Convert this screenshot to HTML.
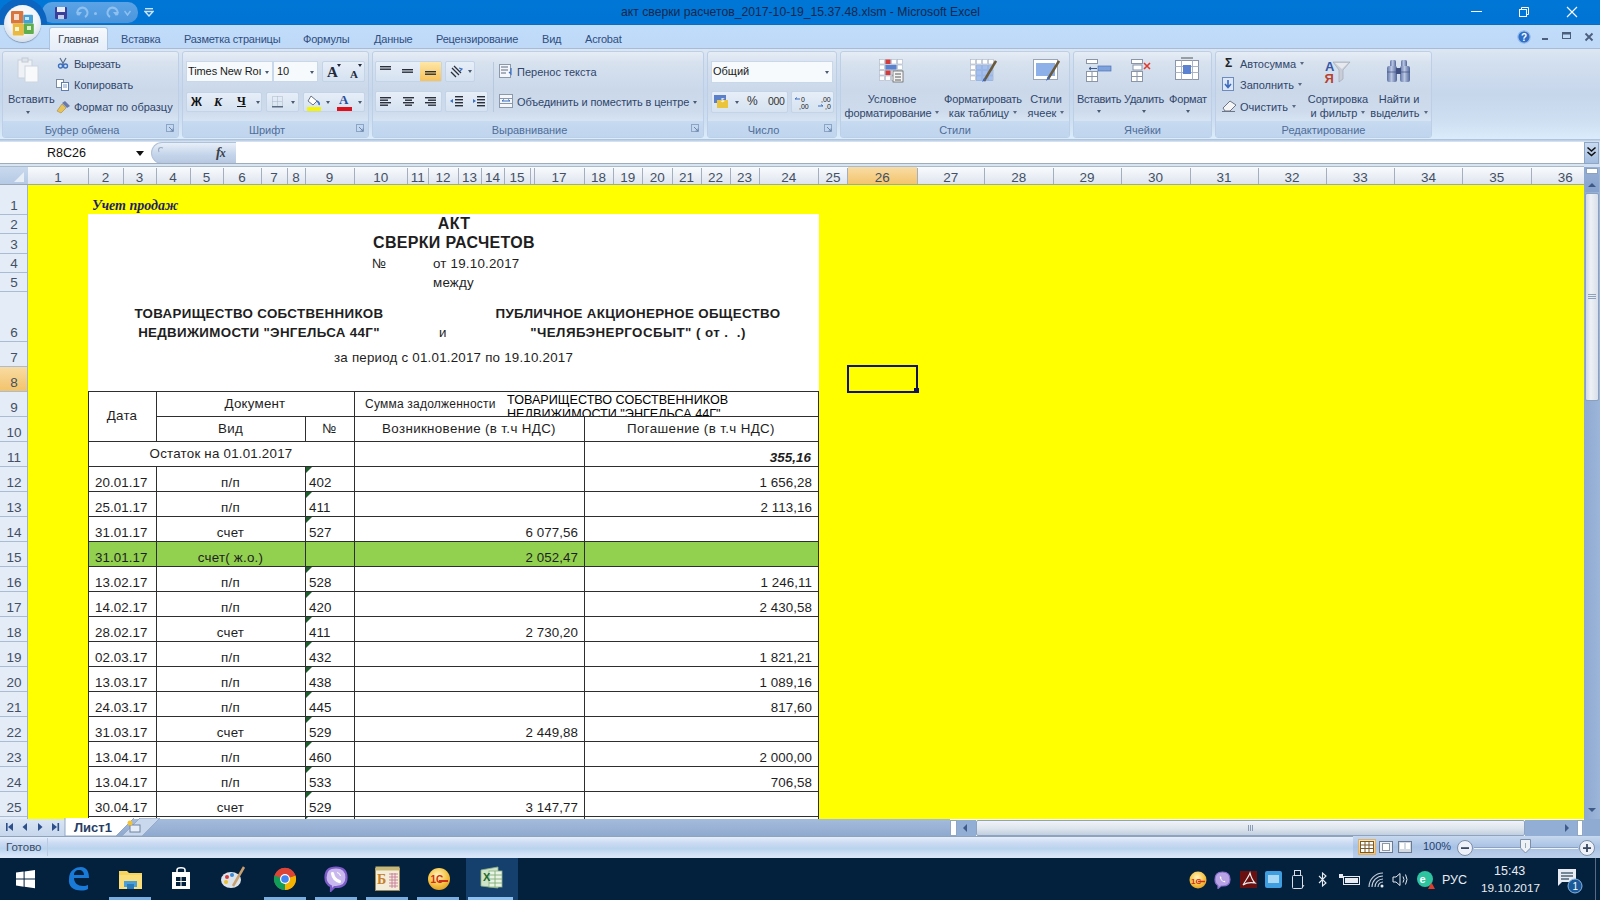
<!DOCTYPE html><html><head><meta charset="utf-8"><style>
*{margin:0;padding:0;box-sizing:border-box}
html,body{width:1600px;height:900px;overflow:hidden;background:#fff;font-family:"Liberation Sans",sans-serif}
.a{position:absolute}
.t{position:absolute;white-space:nowrap;line-height:1}
</style></head><body>
<div class="a" style="left:0;top:0;width:1600px;height:25px;background:linear-gradient(#0077d6,#0074d4 80%,#0079dc)"></div>
<div class="a" style="left:0;top:24px;width:1600px;height:1px;background:#1b67b0"></div>
<div class="a" style="left:0;top:25px;width:1600px;height:24px;background:linear-gradient(#b5e1fc,#bfdcfa 12%,#bfd9f7)"></div>
<div class="a" style="left:0;top:48px;width:1600px;height:93px;border-top:1px solid #a6bbd5;background:linear-gradient(#dde7f3 0%,#d2dfef 15%,#c6d6eb 50%,#cfe0f3 80%,#dcedfc 100%)"></div>
<div class="a" style="left:0;top:141px;width:1600px;height:26px;background:#d2e0f1"></div>
<div class="a" style="left:0;top:142px;width:151px;height:22px;background:#fff"></div>
<div class="a" style="left:235px;top:142px;width:1349px;height:22px;background:#fff"></div>
<div class="a" style="left:0;top:167px;width:1584px;height:18px;background:linear-gradient(#f9fbfd,#dde3ee)"></div>
<div class="a" style="left:0;top:167px;width:28px;height:18px;background:linear-gradient(#c9d9ee,#b4c9e4)"></div>
<svg class="a" style="left:13px;top:171px" width="12" height="12"><path d="M11 1 V11 H1Z" fill="#e8eef6"/></svg>
<div class="a" style="left:0;top:185px;width:28px;height:634px;background:#e4ecf7"></div>
<div class="a" style="left:28px;top:185px;width:1556px;height:634px;background:#ffff00"></div>
<div class="a" style="left:847.5px;top:167px;width:69.5px;height:18px;background:linear-gradient(#f9dca5,#f2c36a)"></div>
<div class="a" style="left:0;top:366px;width:28px;height:25px;background:linear-gradient(#f9dca5,#f2c36a)"></div>
<div class="a" style="left:87.5px;top:168px;width:1px;height:17px;background:#a3afbf"></div>
<div class="a" style="left:122.5px;top:168px;width:1px;height:17px;background:#a3afbf"></div>
<div class="a" style="left:155.5px;top:168px;width:1px;height:17px;background:#a3afbf"></div>
<div class="a" style="left:189.5px;top:168px;width:1px;height:17px;background:#a3afbf"></div>
<div class="a" style="left:222.5px;top:168px;width:1px;height:17px;background:#a3afbf"></div>
<div class="a" style="left:260.5px;top:168px;width:1px;height:17px;background:#a3afbf"></div>
<div class="a" style="left:286.5px;top:168px;width:1px;height:17px;background:#a3afbf"></div>
<div class="a" style="left:304.5px;top:168px;width:1px;height:17px;background:#a3afbf"></div>
<div class="a" style="left:353.5px;top:168px;width:1px;height:17px;background:#a3afbf"></div>
<div class="a" style="left:407.0px;top:168px;width:1px;height:17px;background:#a3afbf"></div>
<div class="a" style="left:427.5px;top:168px;width:1px;height:17px;background:#a3afbf"></div>
<div class="a" style="left:457.5px;top:168px;width:1px;height:17px;background:#a3afbf"></div>
<div class="a" style="left:480.5px;top:168px;width:1px;height:17px;background:#a3afbf"></div>
<div class="a" style="left:503.5px;top:168px;width:1px;height:17px;background:#a3afbf"></div>
<div class="a" style="left:529.5px;top:168px;width:1px;height:17px;background:#a3afbf"></div>
<div class="a" style="left:533.5px;top:168px;width:1px;height:17px;background:#a3afbf"></div>
<div class="a" style="left:583.5px;top:168px;width:1px;height:17px;background:#a3afbf"></div>
<div class="a" style="left:612.5px;top:168px;width:1px;height:17px;background:#a3afbf"></div>
<div class="a" style="left:642.0px;top:168px;width:1px;height:17px;background:#a3afbf"></div>
<div class="a" style="left:671.5px;top:168px;width:1px;height:17px;background:#a3afbf"></div>
<div class="a" style="left:700.5px;top:168px;width:1px;height:17px;background:#a3afbf"></div>
<div class="a" style="left:729.5px;top:168px;width:1px;height:17px;background:#a3afbf"></div>
<div class="a" style="left:758.5px;top:168px;width:1px;height:17px;background:#a3afbf"></div>
<div class="a" style="left:818.0px;top:168px;width:1px;height:17px;background:#a3afbf"></div>
<div class="a" style="left:847.0px;top:168px;width:1px;height:17px;background:#a3afbf"></div>
<div class="a" style="left:916.5px;top:168px;width:1px;height:17px;background:#a3afbf"></div>
<div class="a" style="left:983.9px;top:168px;width:1px;height:17px;background:#a3afbf"></div>
<div class="a" style="left:1052.5px;top:168px;width:1px;height:17px;background:#a3afbf"></div>
<div class="a" style="left:1120.5px;top:168px;width:1px;height:17px;background:#a3afbf"></div>
<div class="a" style="left:1189.5px;top:168px;width:1px;height:17px;background:#a3afbf"></div>
<div class="a" style="left:1257.5px;top:168px;width:1px;height:17px;background:#a3afbf"></div>
<div class="a" style="left:1325.5px;top:168px;width:1px;height:17px;background:#a3afbf"></div>
<div class="a" style="left:1394.0px;top:168px;width:1px;height:17px;background:#a3afbf"></div>
<div class="a" style="left:1462.0px;top:168px;width:1px;height:17px;background:#a3afbf"></div>
<div class="a" style="left:1530.5px;top:168px;width:1px;height:17px;background:#a3afbf"></div>
<div class="a" style="left:0;top:184px;width:1584px;height:1px;background:#9aa7b6"></div>
<div class="t" style="left:28px;top:171px;width:60px;text-align:center;font-size:13.5px;color:#435064">1</div>
<div class="t" style="left:88px;top:171px;width:35px;text-align:center;font-size:13.5px;color:#435064">2</div>
<div class="t" style="left:123px;top:171px;width:33px;text-align:center;font-size:13.5px;color:#435064">3</div>
<div class="t" style="left:156px;top:171px;width:34px;text-align:center;font-size:13.5px;color:#435064">4</div>
<div class="t" style="left:190px;top:171px;width:33px;text-align:center;font-size:13.5px;color:#435064">5</div>
<div class="t" style="left:223px;top:171px;width:38px;text-align:center;font-size:13.5px;color:#435064">6</div>
<div class="t" style="left:261px;top:171px;width:26px;text-align:center;font-size:13.5px;color:#435064">7</div>
<div class="t" style="left:287px;top:171px;width:18px;text-align:center;font-size:13.5px;color:#435064">8</div>
<div class="t" style="left:305px;top:171px;width:49px;text-align:center;font-size:13.5px;color:#435064">9</div>
<div class="t" style="left:354px;top:171px;width:53.5px;text-align:center;font-size:13.5px;color:#435064">10</div>
<div class="t" style="left:407.5px;top:171px;width:20.5px;text-align:center;font-size:13.5px;color:#435064">11</div>
<div class="t" style="left:428px;top:171px;width:30px;text-align:center;font-size:13.5px;color:#435064">12</div>
<div class="t" style="left:458px;top:171px;width:23px;text-align:center;font-size:13.5px;color:#435064">13</div>
<div class="t" style="left:481px;top:171px;width:23px;text-align:center;font-size:13.5px;color:#435064">14</div>
<div class="t" style="left:504px;top:171px;width:26px;text-align:center;font-size:13.5px;color:#435064">15</div>
<div class="t" style="left:534px;top:171px;width:50px;text-align:center;font-size:13.5px;color:#435064">17</div>
<div class="t" style="left:584px;top:171px;width:29px;text-align:center;font-size:13.5px;color:#435064">18</div>
<div class="t" style="left:613px;top:171px;width:29.5px;text-align:center;font-size:13.5px;color:#435064">19</div>
<div class="t" style="left:642.5px;top:171px;width:29.5px;text-align:center;font-size:13.5px;color:#435064">20</div>
<div class="t" style="left:672px;top:171px;width:29px;text-align:center;font-size:13.5px;color:#435064">21</div>
<div class="t" style="left:701px;top:171px;width:29px;text-align:center;font-size:13.5px;color:#435064">22</div>
<div class="t" style="left:730px;top:171px;width:29px;text-align:center;font-size:13.5px;color:#435064">23</div>
<div class="t" style="left:759px;top:171px;width:59.5px;text-align:center;font-size:13.5px;color:#435064">24</div>
<div class="t" style="left:818.5px;top:171px;width:29.0px;text-align:center;font-size:13.5px;color:#435064">25</div>
<div class="t" style="left:847.5px;top:171px;width:69.5px;text-align:center;font-size:13.5px;color:#435064">26</div>
<div class="t" style="left:917px;top:171px;width:67.39999999999998px;text-align:center;font-size:13.5px;color:#435064">27</div>
<div class="t" style="left:984.4px;top:171px;width:68.60000000000002px;text-align:center;font-size:13.5px;color:#435064">28</div>
<div class="t" style="left:1053px;top:171px;width:68px;text-align:center;font-size:13.5px;color:#435064">29</div>
<div class="t" style="left:1121px;top:171px;width:69px;text-align:center;font-size:13.5px;color:#435064">30</div>
<div class="t" style="left:1190px;top:171px;width:68px;text-align:center;font-size:13.5px;color:#435064">31</div>
<div class="t" style="left:1258px;top:171px;width:68px;text-align:center;font-size:13.5px;color:#435064">32</div>
<div class="t" style="left:1326px;top:171px;width:68.5px;text-align:center;font-size:13.5px;color:#435064">33</div>
<div class="t" style="left:1394.5px;top:171px;width:68.0px;text-align:center;font-size:13.5px;color:#435064">34</div>
<div class="t" style="left:1462.5px;top:171px;width:68.5px;text-align:center;font-size:13.5px;color:#435064">35</div>
<div class="t" style="left:1531px;top:171px;width:68.59999999999991px;text-align:center;font-size:13.5px;color:#435064">36</div>
<div class="t" style="left:0;top:199px;width:28px;text-align:center;font-size:13.5px;color:#435064">1</div>
<div class="a" style="left:0;top:213.5px;width:28px;height:1px;background:#a9bcd3"></div>
<div class="t" style="left:0;top:218px;width:28px;text-align:center;font-size:13.5px;color:#435064">2</div>
<div class="a" style="left:0;top:232.5px;width:28px;height:1px;background:#a9bcd3"></div>
<div class="t" style="left:0;top:238px;width:28px;text-align:center;font-size:13.5px;color:#435064">3</div>
<div class="a" style="left:0;top:252.5px;width:28px;height:1px;background:#a9bcd3"></div>
<div class="t" style="left:0;top:257px;width:28px;text-align:center;font-size:13.5px;color:#435064">4</div>
<div class="a" style="left:0;top:271.5px;width:28px;height:1px;background:#a9bcd3"></div>
<div class="t" style="left:0;top:276px;width:28px;text-align:center;font-size:13.5px;color:#435064">5</div>
<div class="a" style="left:0;top:290.5px;width:28px;height:1px;background:#a9bcd3"></div>
<div class="t" style="left:0;top:326px;width:28px;text-align:center;font-size:13.5px;color:#435064">6</div>
<div class="a" style="left:0;top:340.5px;width:28px;height:1px;background:#a9bcd3"></div>
<div class="t" style="left:0;top:351px;width:28px;text-align:center;font-size:13.5px;color:#435064">7</div>
<div class="a" style="left:0;top:365.5px;width:28px;height:1px;background:#a9bcd3"></div>
<div class="t" style="left:0;top:376px;width:28px;text-align:center;font-size:13.5px;color:#435064">8</div>
<div class="a" style="left:0;top:390.5px;width:28px;height:1px;background:#a9bcd3"></div>
<div class="t" style="left:0;top:401px;width:28px;text-align:center;font-size:13.5px;color:#435064">9</div>
<div class="a" style="left:0;top:415.5px;width:28px;height:1px;background:#a9bcd3"></div>
<div class="t" style="left:0;top:426px;width:28px;text-align:center;font-size:13.5px;color:#435064">10</div>
<div class="a" style="left:0;top:440.5px;width:28px;height:1px;background:#a9bcd3"></div>
<div class="t" style="left:0;top:451px;width:28px;text-align:center;font-size:13.5px;color:#435064">11</div>
<div class="a" style="left:0;top:465.5px;width:28px;height:1px;background:#a9bcd3"></div>
<div class="t" style="left:0;top:476px;width:28px;text-align:center;font-size:13.5px;color:#435064">12</div>
<div class="a" style="left:0;top:490.5px;width:28px;height:1px;background:#a9bcd3"></div>
<div class="t" style="left:0;top:501px;width:28px;text-align:center;font-size:13.5px;color:#435064">13</div>
<div class="a" style="left:0;top:515.5px;width:28px;height:1px;background:#a9bcd3"></div>
<div class="t" style="left:0;top:526px;width:28px;text-align:center;font-size:13.5px;color:#435064">14</div>
<div class="a" style="left:0;top:540.5px;width:28px;height:1px;background:#a9bcd3"></div>
<div class="t" style="left:0;top:551px;width:28px;text-align:center;font-size:13.5px;color:#435064">15</div>
<div class="a" style="left:0;top:565.5px;width:28px;height:1px;background:#a9bcd3"></div>
<div class="t" style="left:0;top:576px;width:28px;text-align:center;font-size:13.5px;color:#435064">16</div>
<div class="a" style="left:0;top:590.5px;width:28px;height:1px;background:#a9bcd3"></div>
<div class="t" style="left:0;top:601px;width:28px;text-align:center;font-size:13.5px;color:#435064">17</div>
<div class="a" style="left:0;top:615.5px;width:28px;height:1px;background:#a9bcd3"></div>
<div class="t" style="left:0;top:626px;width:28px;text-align:center;font-size:13.5px;color:#435064">18</div>
<div class="a" style="left:0;top:640.5px;width:28px;height:1px;background:#a9bcd3"></div>
<div class="t" style="left:0;top:651px;width:28px;text-align:center;font-size:13.5px;color:#435064">19</div>
<div class="a" style="left:0;top:665.5px;width:28px;height:1px;background:#a9bcd3"></div>
<div class="t" style="left:0;top:676px;width:28px;text-align:center;font-size:13.5px;color:#435064">20</div>
<div class="a" style="left:0;top:690.5px;width:28px;height:1px;background:#a9bcd3"></div>
<div class="t" style="left:0;top:701px;width:28px;text-align:center;font-size:13.5px;color:#435064">21</div>
<div class="a" style="left:0;top:715.5px;width:28px;height:1px;background:#a9bcd3"></div>
<div class="t" style="left:0;top:726px;width:28px;text-align:center;font-size:13.5px;color:#435064">22</div>
<div class="a" style="left:0;top:740.5px;width:28px;height:1px;background:#a9bcd3"></div>
<div class="t" style="left:0;top:751px;width:28px;text-align:center;font-size:13.5px;color:#435064">23</div>
<div class="a" style="left:0;top:765.5px;width:28px;height:1px;background:#a9bcd3"></div>
<div class="t" style="left:0;top:776px;width:28px;text-align:center;font-size:13.5px;color:#435064">24</div>
<div class="a" style="left:0;top:790.5px;width:28px;height:1px;background:#a9bcd3"></div>
<div class="t" style="left:0;top:801px;width:28px;text-align:center;font-size:13.5px;color:#435064">25</div>
<div class="a" style="left:0;top:815.5px;width:28px;height:1px;background:#a9bcd3"></div>
<div class="t" style="left:0;top:826px;width:28px;text-align:center;font-size:13.5px;color:#435064">26</div>
<div class="a" style="left:27px;top:185px;width:1px;height:634px;background:#9fb3cb"></div>
<div class="a" style="left:88px;top:214px;width:730.5px;height:605px;background:#fff"></div>
<div class="a" style="left:88px;top:541px;width:730.5px;height:25px;background:#92d050"></div>
<div class="a" style="left:88px;top:391px;width:731px;height:1px;background:#2e2e2e"></div>
<div class="a" style="left:156px;top:416px;width:663px;height:1px;background:#2e2e2e"></div>
<div class="a" style="left:88px;top:441px;width:731px;height:1px;background:#2e2e2e"></div>
<div class="a" style="left:88px;top:466px;width:731px;height:1px;background:#2e2e2e"></div>
<div class="a" style="left:88px;top:491px;width:731px;height:1px;background:#2e2e2e"></div>
<div class="a" style="left:88px;top:516px;width:731px;height:1px;background:#2e2e2e"></div>
<div class="a" style="left:88px;top:541px;width:731px;height:1px;background:#2e2e2e"></div>
<div class="a" style="left:88px;top:566px;width:731px;height:1px;background:#2e2e2e"></div>
<div class="a" style="left:88px;top:591px;width:731px;height:1px;background:#2e2e2e"></div>
<div class="a" style="left:88px;top:616px;width:731px;height:1px;background:#2e2e2e"></div>
<div class="a" style="left:88px;top:641px;width:731px;height:1px;background:#2e2e2e"></div>
<div class="a" style="left:88px;top:666px;width:731px;height:1px;background:#2e2e2e"></div>
<div class="a" style="left:88px;top:691px;width:731px;height:1px;background:#2e2e2e"></div>
<div class="a" style="left:88px;top:716px;width:731px;height:1px;background:#2e2e2e"></div>
<div class="a" style="left:88px;top:741px;width:731px;height:1px;background:#2e2e2e"></div>
<div class="a" style="left:88px;top:766px;width:731px;height:1px;background:#2e2e2e"></div>
<div class="a" style="left:88px;top:791px;width:731px;height:1px;background:#2e2e2e"></div>
<div class="a" style="left:88px;top:816px;width:731px;height:1px;background:#2e2e2e"></div>
<div class="a" style="left:88px;top:391px;width:1px;height:429px;background:#2e2e2e"></div>
<div class="a" style="left:818px;top:391px;width:1px;height:429px;background:#2e2e2e"></div>
<div class="a" style="left:156px;top:391px;width:1px;height:51px;background:#2e2e2e"></div>
<div class="a" style="left:156px;top:466px;width:1px;height:354px;background:#2e2e2e"></div>
<div class="a" style="left:305px;top:416px;width:1px;height:26px;background:#2e2e2e"></div>
<div class="a" style="left:305px;top:466px;width:1px;height:354px;background:#2e2e2e"></div>
<div class="a" style="left:354px;top:391px;width:1px;height:429px;background:#2e2e2e"></div>
<div class="a" style="left:584px;top:416px;width:1px;height:404px;background:#2e2e2e"></div>
<div class="t" style="left:92px;top:199px;font-size:14px;font-weight:bold;font-style:italic;color:#1f1f5f;letter-spacing:0;font-family:'Liberation Serif',serif">Учет продаж</div>
<div class="t" style="left:354px;top:216px;width:200px;text-align:center;font-size:16px;font-weight:bold;font-style:normal;color:#1e1e1e;letter-spacing:0.33px;">АКТ</div>
<div class="t" style="left:354px;top:235px;width:200px;text-align:center;font-size:16px;font-weight:bold;font-style:normal;color:#1e1e1e;letter-spacing:0.33px;">СВЕРКИ РАСЧЕТОВ</div>
<div class="t" style="left:372px;top:257px;font-size:13.33px;font-weight:normal;font-style:normal;color:#1e1e1e;letter-spacing:0.22px;">№</div>
<div class="t" style="left:433px;top:257px;font-size:13.33px;font-weight:normal;font-style:normal;color:#1e1e1e;letter-spacing:0.22px;">от 19.10.2017</div>
<div class="t" style="left:433px;top:276px;font-size:13.33px;font-weight:normal;font-style:normal;color:#1e1e1e;letter-spacing:0.22px;">между</div>
<div class="t" style="left:88px;top:307px;width:342px;text-align:center;font-size:13.33px;font-weight:bold;font-style:normal;color:#1e1e1e;letter-spacing:0.33px;">ТОВАРИЩЕСТВО СОБСТВЕННИКОВ</div>
<div class="t" style="left:88px;top:326px;width:342px;text-align:center;font-size:13.33px;font-weight:bold;font-style:normal;color:#1e1e1e;letter-spacing:0.33px;">НЕДВИЖИМОСТИ "ЭНГЕЛЬСА 44Г"</div>
<div class="t" style="left:439px;top:326px;font-size:13.33px;font-weight:normal;font-style:normal;color:#1e1e1e;letter-spacing:0.22px;">и</div>
<div class="t" style="left:480px;top:307px;width:316px;text-align:center;font-size:13.33px;font-weight:bold;font-style:normal;color:#1e1e1e;letter-spacing:0.33px;">ПУБЛИЧНОЕ АКЦИОНЕРНОЕ ОБЩЕСТВО</div>
<div class="t" style="left:480px;top:326px;width:316px;text-align:center;font-size:13.33px;font-weight:bold;font-style:normal;color:#1e1e1e;letter-spacing:0.44px;white-space:pre">"ЧЕЛЯБЭНЕРГОСБЫТ" ( от .  .)</div>
<div class="t" style="left:334px;top:351px;font-size:13.33px;font-weight:normal;font-style:normal;color:#1e1e1e;letter-spacing:0.22px;">за период с 01.01.2017 по 19.10.2017</div>
<div class="t" style="left:88px;top:409px;width:68px;text-align:center;font-size:13.33px;font-weight:normal;font-style:normal;color:#1e1e1e;letter-spacing:0.22px;">Дата</div>
<div class="t" style="left:156px;top:397px;width:198px;text-align:center;font-size:13.33px;font-weight:normal;font-style:normal;color:#1e1e1e;letter-spacing:0.22px;">Документ</div>
<div class="t" style="left:156px;top:422px;width:149px;text-align:center;font-size:13.33px;font-weight:normal;font-style:normal;color:#1e1e1e;letter-spacing:0.22px;">Вид</div>
<div class="t" style="left:305px;top:422px;width:49px;text-align:center;font-size:13.33px;font-weight:normal;font-style:normal;color:#1e1e1e;letter-spacing:0.22px;">№</div>
<div class="t" style="left:365px;top:398px;font-size:12px;font-weight:normal;font-style:normal;color:#1e1e1e;letter-spacing:0.22px;">Сумма задолженности</div>
<div class="a" style="left:505px;top:392px;width:300px;height:24px;overflow:hidden"><div class="t" style="left:2px;top:1px;font-size:12.6px;line-height:14px">ТОВАРИЩЕСТВО СОБСТВЕННИКОВ<br>НЕДВИЖИМОСТИ "ЭНГЕЛЬСА 44Г"</div></div>
<div class="t" style="left:354px;top:422px;width:230px;text-align:center;font-size:13.33px;font-weight:normal;font-style:normal;color:#1e1e1e;letter-spacing:0.36px">Возникновение (в т.ч НДС)</div>
<div class="t" style="left:584px;top:422px;width:234px;text-align:center;font-size:13.33px;font-weight:normal;font-style:normal;color:#1e1e1e;letter-spacing:0.38px">Погашение (в т.ч НДС)</div>
<div class="t" style="left:88px;top:447px;width:266px;text-align:center;font-size:13.33px;font-weight:normal;font-style:normal;color:#1e1e1e;letter-spacing:0.22px;">Остаток на 01.01.2017</div>
<div class="t" style="left:584px;top:451px;width:227px;text-align:right;font-size:13.33px;font-weight:bold;font-style:italic;color:#1e1e1e;letter-spacing:0.08px;">355,16</div>
<div class="t" style="left:95px;top:476px;font-size:13.33px;font-weight:normal;font-style:normal;color:#1e1e1e;letter-spacing:0.08px;">20.01.17</div>
<div class="t" style="left:156px;top:476px;width:149px;text-align:center;font-size:13.33px;font-weight:normal;font-style:normal;color:#1e1e1e;letter-spacing:0.22px;">п/п</div>
<div class="t" style="left:309px;top:476px;font-size:13.33px;font-weight:normal;font-style:normal;color:#1e1e1e;letter-spacing:0.08px;">402</div>
<div class="a" style="left:306px;top:467px;width:0;height:0;border-top:6px solid #1d5f2c;border-right:6px solid transparent"></div>
<div class="t" style="left:584px;top:476px;width:228px;text-align:right;font-size:13.33px;font-weight:normal;font-style:normal;color:#1e1e1e;letter-spacing:0.08px;">1 656,28</div>
<div class="t" style="left:95px;top:501px;font-size:13.33px;font-weight:normal;font-style:normal;color:#1e1e1e;letter-spacing:0.08px;">25.01.17</div>
<div class="t" style="left:156px;top:501px;width:149px;text-align:center;font-size:13.33px;font-weight:normal;font-style:normal;color:#1e1e1e;letter-spacing:0.22px;">п/п</div>
<div class="t" style="left:309px;top:501px;font-size:13.33px;font-weight:normal;font-style:normal;color:#1e1e1e;letter-spacing:0.08px;">411</div>
<div class="a" style="left:306px;top:492px;width:0;height:0;border-top:6px solid #1d5f2c;border-right:6px solid transparent"></div>
<div class="t" style="left:584px;top:501px;width:228px;text-align:right;font-size:13.33px;font-weight:normal;font-style:normal;color:#1e1e1e;letter-spacing:0.08px;">2 113,16</div>
<div class="t" style="left:95px;top:526px;font-size:13.33px;font-weight:normal;font-style:normal;color:#1e1e1e;letter-spacing:0.08px;">31.01.17</div>
<div class="t" style="left:156px;top:526px;width:149px;text-align:center;font-size:13.33px;font-weight:normal;font-style:normal;color:#1e1e1e;letter-spacing:0.22px;">счет</div>
<div class="t" style="left:309px;top:526px;font-size:13.33px;font-weight:normal;font-style:normal;color:#1e1e1e;letter-spacing:0.08px;">527</div>
<div class="a" style="left:306px;top:517px;width:0;height:0;border-top:6px solid #1d5f2c;border-right:6px solid transparent"></div>
<div class="t" style="left:354px;top:526px;width:224px;text-align:right;font-size:13.33px;font-weight:normal;font-style:normal;color:#1e1e1e;letter-spacing:0.08px;">6 077,56</div>
<div class="t" style="left:95px;top:551px;font-size:13.33px;font-weight:normal;font-style:normal;color:#1e1e1e;letter-spacing:0.08px;">31.01.17</div>
<div class="t" style="left:156px;top:551px;width:149px;text-align:center;font-size:13.33px;font-weight:normal;font-style:normal;color:#1e1e1e;letter-spacing:0.22px;">счет( ж.о.)</div>
<div class="t" style="left:354px;top:551px;width:224px;text-align:right;font-size:13.33px;font-weight:normal;font-style:normal;color:#1e1e1e;letter-spacing:0.08px;">2 052,47</div>
<div class="t" style="left:95px;top:576px;font-size:13.33px;font-weight:normal;font-style:normal;color:#1e1e1e;letter-spacing:0.08px;">13.02.17</div>
<div class="t" style="left:156px;top:576px;width:149px;text-align:center;font-size:13.33px;font-weight:normal;font-style:normal;color:#1e1e1e;letter-spacing:0.22px;">п/п</div>
<div class="t" style="left:309px;top:576px;font-size:13.33px;font-weight:normal;font-style:normal;color:#1e1e1e;letter-spacing:0.08px;">528</div>
<div class="a" style="left:306px;top:567px;width:0;height:0;border-top:6px solid #1d5f2c;border-right:6px solid transparent"></div>
<div class="t" style="left:584px;top:576px;width:228px;text-align:right;font-size:13.33px;font-weight:normal;font-style:normal;color:#1e1e1e;letter-spacing:0.08px;">1 246,11</div>
<div class="t" style="left:95px;top:601px;font-size:13.33px;font-weight:normal;font-style:normal;color:#1e1e1e;letter-spacing:0.08px;">14.02.17</div>
<div class="t" style="left:156px;top:601px;width:149px;text-align:center;font-size:13.33px;font-weight:normal;font-style:normal;color:#1e1e1e;letter-spacing:0.22px;">п/п</div>
<div class="t" style="left:309px;top:601px;font-size:13.33px;font-weight:normal;font-style:normal;color:#1e1e1e;letter-spacing:0.08px;">420</div>
<div class="a" style="left:306px;top:592px;width:0;height:0;border-top:6px solid #1d5f2c;border-right:6px solid transparent"></div>
<div class="t" style="left:584px;top:601px;width:228px;text-align:right;font-size:13.33px;font-weight:normal;font-style:normal;color:#1e1e1e;letter-spacing:0.08px;">2 430,58</div>
<div class="t" style="left:95px;top:626px;font-size:13.33px;font-weight:normal;font-style:normal;color:#1e1e1e;letter-spacing:0.08px;">28.02.17</div>
<div class="t" style="left:156px;top:626px;width:149px;text-align:center;font-size:13.33px;font-weight:normal;font-style:normal;color:#1e1e1e;letter-spacing:0.22px;">счет</div>
<div class="t" style="left:309px;top:626px;font-size:13.33px;font-weight:normal;font-style:normal;color:#1e1e1e;letter-spacing:0.08px;">411</div>
<div class="a" style="left:306px;top:617px;width:0;height:0;border-top:6px solid #1d5f2c;border-right:6px solid transparent"></div>
<div class="t" style="left:354px;top:626px;width:224px;text-align:right;font-size:13.33px;font-weight:normal;font-style:normal;color:#1e1e1e;letter-spacing:0.08px;">2 730,20</div>
<div class="t" style="left:95px;top:651px;font-size:13.33px;font-weight:normal;font-style:normal;color:#1e1e1e;letter-spacing:0.08px;">02.03.17</div>
<div class="t" style="left:156px;top:651px;width:149px;text-align:center;font-size:13.33px;font-weight:normal;font-style:normal;color:#1e1e1e;letter-spacing:0.22px;">п/п</div>
<div class="t" style="left:309px;top:651px;font-size:13.33px;font-weight:normal;font-style:normal;color:#1e1e1e;letter-spacing:0.08px;">432</div>
<div class="a" style="left:306px;top:642px;width:0;height:0;border-top:6px solid #1d5f2c;border-right:6px solid transparent"></div>
<div class="t" style="left:584px;top:651px;width:228px;text-align:right;font-size:13.33px;font-weight:normal;font-style:normal;color:#1e1e1e;letter-spacing:0.08px;">1 821,21</div>
<div class="t" style="left:95px;top:676px;font-size:13.33px;font-weight:normal;font-style:normal;color:#1e1e1e;letter-spacing:0.08px;">13.03.17</div>
<div class="t" style="left:156px;top:676px;width:149px;text-align:center;font-size:13.33px;font-weight:normal;font-style:normal;color:#1e1e1e;letter-spacing:0.22px;">п/п</div>
<div class="t" style="left:309px;top:676px;font-size:13.33px;font-weight:normal;font-style:normal;color:#1e1e1e;letter-spacing:0.08px;">438</div>
<div class="a" style="left:306px;top:667px;width:0;height:0;border-top:6px solid #1d5f2c;border-right:6px solid transparent"></div>
<div class="t" style="left:584px;top:676px;width:228px;text-align:right;font-size:13.33px;font-weight:normal;font-style:normal;color:#1e1e1e;letter-spacing:0.08px;">1 089,16</div>
<div class="t" style="left:95px;top:701px;font-size:13.33px;font-weight:normal;font-style:normal;color:#1e1e1e;letter-spacing:0.08px;">24.03.17</div>
<div class="t" style="left:156px;top:701px;width:149px;text-align:center;font-size:13.33px;font-weight:normal;font-style:normal;color:#1e1e1e;letter-spacing:0.22px;">п/п</div>
<div class="t" style="left:309px;top:701px;font-size:13.33px;font-weight:normal;font-style:normal;color:#1e1e1e;letter-spacing:0.08px;">445</div>
<div class="a" style="left:306px;top:692px;width:0;height:0;border-top:6px solid #1d5f2c;border-right:6px solid transparent"></div>
<div class="t" style="left:584px;top:701px;width:228px;text-align:right;font-size:13.33px;font-weight:normal;font-style:normal;color:#1e1e1e;letter-spacing:0.08px;">817,60</div>
<div class="t" style="left:95px;top:726px;font-size:13.33px;font-weight:normal;font-style:normal;color:#1e1e1e;letter-spacing:0.08px;">31.03.17</div>
<div class="t" style="left:156px;top:726px;width:149px;text-align:center;font-size:13.33px;font-weight:normal;font-style:normal;color:#1e1e1e;letter-spacing:0.22px;">счет</div>
<div class="t" style="left:309px;top:726px;font-size:13.33px;font-weight:normal;font-style:normal;color:#1e1e1e;letter-spacing:0.08px;">529</div>
<div class="a" style="left:306px;top:717px;width:0;height:0;border-top:6px solid #1d5f2c;border-right:6px solid transparent"></div>
<div class="t" style="left:354px;top:726px;width:224px;text-align:right;font-size:13.33px;font-weight:normal;font-style:normal;color:#1e1e1e;letter-spacing:0.08px;">2 449,88</div>
<div class="t" style="left:95px;top:751px;font-size:13.33px;font-weight:normal;font-style:normal;color:#1e1e1e;letter-spacing:0.08px;">13.04.17</div>
<div class="t" style="left:156px;top:751px;width:149px;text-align:center;font-size:13.33px;font-weight:normal;font-style:normal;color:#1e1e1e;letter-spacing:0.22px;">п/п</div>
<div class="t" style="left:309px;top:751px;font-size:13.33px;font-weight:normal;font-style:normal;color:#1e1e1e;letter-spacing:0.08px;">460</div>
<div class="a" style="left:306px;top:742px;width:0;height:0;border-top:6px solid #1d5f2c;border-right:6px solid transparent"></div>
<div class="t" style="left:584px;top:751px;width:228px;text-align:right;font-size:13.33px;font-weight:normal;font-style:normal;color:#1e1e1e;letter-spacing:0.08px;">2 000,00</div>
<div class="t" style="left:95px;top:776px;font-size:13.33px;font-weight:normal;font-style:normal;color:#1e1e1e;letter-spacing:0.08px;">13.04.17</div>
<div class="t" style="left:156px;top:776px;width:149px;text-align:center;font-size:13.33px;font-weight:normal;font-style:normal;color:#1e1e1e;letter-spacing:0.22px;">п/п</div>
<div class="t" style="left:309px;top:776px;font-size:13.33px;font-weight:normal;font-style:normal;color:#1e1e1e;letter-spacing:0.08px;">533</div>
<div class="a" style="left:306px;top:767px;width:0;height:0;border-top:6px solid #1d5f2c;border-right:6px solid transparent"></div>
<div class="t" style="left:584px;top:776px;width:228px;text-align:right;font-size:13.33px;font-weight:normal;font-style:normal;color:#1e1e1e;letter-spacing:0.08px;">706,58</div>
<div class="t" style="left:95px;top:801px;font-size:13.33px;font-weight:normal;font-style:normal;color:#1e1e1e;letter-spacing:0.08px;">30.04.17</div>
<div class="t" style="left:156px;top:801px;width:149px;text-align:center;font-size:13.33px;font-weight:normal;font-style:normal;color:#1e1e1e;letter-spacing:0.22px;">счет</div>
<div class="t" style="left:309px;top:801px;font-size:13.33px;font-weight:normal;font-style:normal;color:#1e1e1e;letter-spacing:0.08px;">529</div>
<div class="a" style="left:306px;top:792px;width:0;height:0;border-top:6px solid #1d5f2c;border-right:6px solid transparent"></div>
<div class="t" style="left:354px;top:801px;width:224px;text-align:right;font-size:13.33px;font-weight:normal;font-style:normal;color:#1e1e1e;letter-spacing:0.08px;">3 147,77</div>
<div class="a" style="left:306px;top:817px;width:0;height:0;border-top:2px solid #1d5f2c;border-right:2px solid transparent"></div>
<div class="a" style="left:847px;top:365px;width:71px;height:28px;border:2px solid #121256"></div>
<div class="a" style="left:914px;top:388px;width:5px;height:5px;background:#121256"></div>
<div class="a" style="left:42px;top:2px;width:96px;height:21px;border-radius:10px;background:linear-gradient(#5aa3e6,#4a94dc)"></div>
<svg class="a" style="left:54px;top:6px" width="14" height="14" viewBox="0 0 14 14"><rect x="1" y="1" width="12" height="12" rx="1" fill="#3b3f9a"/><rect x="3" y="1" width="8" height="5" fill="#e8ecf6"/><rect x="4" y="9" width="6" height="4" fill="#c7cde8"/></svg>
<svg class="a" style="left:75px;top:6px" width="14" height="13" viewBox="0 0 14 13"><path d="M3 9 A5 5 0 1 1 10 11" fill="none" stroke="#8fc0ee" stroke-width="2.2"/><path d="M1 6 L4 10 L7 6Z" fill="#8fc0ee"/></svg>
<div class="a" style="left:94px;top:12px;width:3px;height:3px;border-radius:50%;background:#8fc0ee"></div>
<svg class="a" style="left:106px;top:6px" width="14" height="13" viewBox="0 0 14 13"><path d="M11 9 A5 5 0 1 0 4 11" fill="none" stroke="#8fc0ee" stroke-width="2.2"/><path d="M13 6 L10 10 L7 6Z" fill="#8fc0ee"/></svg>
<svg class="a" style="left:124px;top:10px" width="7" height="6" viewBox="0 0 7 6"><path d="M0.5 1 L3.5 5 L6.5 1" fill="none" stroke="#8fc0ee" stroke-width="1.5"/></svg>
<svg class="a" style="left:144px;top:7px" width="10" height="10" viewBox="0 0 10 10"><rect x="1" y="1" width="8" height="1.4" fill="#cfe3f7"/><path d="M1 4.5 L5 9 L9 4.5Z" fill="none" stroke="#cfe3f7" stroke-width="1.4"/></svg>
<div class="t" style="left:621px;top:6px;font-size:12.2px;color:#13284d;">акт сверки расчетов_2017-10-19_15.37.48.xlsm - Microsoft Excel</div>
<div class="a" style="left:1471px;top:11px;width:11px;height:1px;background:#fff"></div>
<svg class="a" style="left:1518px;top:6px" width="12" height="12" viewBox="0 0 12 12"><rect x="1.5" y="3.5" width="7" height="7" fill="none" stroke="#fff"/><path d="M3.5 3.5 V1.5 H10.5 V8.5 H8.5" fill="none" stroke="#fff"/></svg>
<svg class="a" style="left:1566px;top:6px" width="12" height="12" viewBox="0 0 12 12"><path d="M1 1 L11 11 M11 1 L1 11" stroke="#fff" stroke-width="1.1"/></svg>
<div class="a" style="left:0;top:0;width:50px;height:24px;overflow:hidden"><div class="a" style="left:-3px;top:-2px;width:50px;height:50px;border-radius:50%;background:#0a64c0"></div></div>
<div class="a" style="left:4px;top:5px;width:37px;height:37px;border-radius:50%;background:radial-gradient(circle at 50% 40%,#ffffff 0%,#f1f4f8 50%,#cdd8e4 85%,#aebdd0 100%);box-shadow:0 1px 1px #7f97b5"></div>
<svg class="a" style="left:10px;top:10px" width="26" height="27" viewBox="0 0 26 27"><rect x="1" y="1" width="12.3" height="12.5" rx="1" fill="#d8763e"/><rect x="4" y="4" width="5" height="6" fill="#f6ddd0"/><rect x="13.3" y="4.7" width="9.7" height="8.8" rx="1" fill="#45a0d6"/><rect x="15" y="7" width="4" height="3" fill="#c8e6f8"/><rect x="2.8" y="13.5" width="11" height="12" rx="1" fill="#e9b940"/><rect x="5" y="17" width="4" height="4" fill="#fff6d8"/><rect x="13.8" y="13.5" width="10" height="10.5" rx="1" fill="#5fae4e"/><rect x="17" y="16" width="4" height="4" fill="#d8f0c8"/></svg>
<div class="a" style="left:49px;top:27px;width:59px;height:23px;border-radius:3px 3px 0 0;border:1px solid #a8c4e2;border-bottom:none;background:linear-gradient(#f6f9fd,#e6eef8)"></div>
<div class="t" style="left:58px;top:34px;font-size:11px;color:#333d4c;letter-spacing:-0.2px">Главная</div>
<div class="t" style="left:121px;top:34px;font-size:11px;color:#2f4e80;letter-spacing:-0.2px">Вставка</div>
<div class="t" style="left:184px;top:34px;font-size:11px;color:#2f4e80;letter-spacing:-0.2px">Разметка страницы</div>
<div class="t" style="left:303px;top:34px;font-size:11px;color:#2f4e80;letter-spacing:-0.2px">Формулы</div>
<div class="t" style="left:374px;top:34px;font-size:11px;color:#2f4e80;letter-spacing:-0.2px">Данные</div>
<div class="t" style="left:436px;top:34px;font-size:11px;color:#2f4e80;letter-spacing:-0.2px">Рецензирование</div>
<div class="t" style="left:542px;top:34px;font-size:11px;color:#2f4e80;letter-spacing:-0.2px">Вид</div>
<div class="t" style="left:585px;top:34px;font-size:11px;color:#2f4e80;letter-spacing:-0.2px">Acrobat</div>
<svg class="a" style="left:1517px;top:30px" width="14" height="14" viewBox="0 0 14 14"><circle cx="7" cy="7" r="6.2" fill="#2f6fc8" stroke="#9cc0ea" stroke-width="1.2"/><text x="7" y="10.5" font-size="10" font-weight="bold" text-anchor="middle" fill="#fff" font-family="Liberation Sans">?</text></svg>
<div class="a" style="left:1542px;top:38px;width:6px;height:2px;background:#4b5f7d"></div>
<svg class="a" style="left:1562px;top:32px" width="10" height="8" viewBox="0 0 10 8"><rect x="0.5" y="0.5" width="8" height="6" fill="none" stroke="#4b5f7d"/><rect x="0.5" y="0.5" width="8" height="2" fill="#4b5f7d"/></svg>
<svg class="a" style="left:1584px;top:32px" width="10" height="10" viewBox="0 0 10 10"><path d="M1.5 1.5 L8.5 8.5 M8.5 1.5 L1.5 8.5" stroke="#4b5f7d" stroke-width="1.8"/></svg>
<div class="a" style="left:2px;top:51px;width:177px;height:87px;border-radius:3px;border:1px solid #bccfe6;background:linear-gradient(#e6edf6 0%,#d8e2ef 12%,#cad8ea 45%,#cddbed 70%,#d5e3f2 80%);overflow:hidden"><div class="a" style="left:0;top:69px;width:100%;height:17px;background:linear-gradient(#c6daf0,#bfd5ee)"></div></div>
<div class="t" style="left:22.0px;top:125px;width:120px;text-align:center;font-size:11px;color:#4f6d99">Буфер обмена</div>
<svg class="a" style="left:166px;top:124px" width="9" height="9" viewBox="0 0 9 9"><rect x="0.5" y="0.5" width="7" height="7" fill="none" stroke="#8ba5c6"/><path d="M3 3 L7 7 M7 4.5 V7 H4.5" fill="none" stroke="#6c86aa"/></svg>
<div class="a" style="left:182px;top:51px;width:187px;height:87px;border-radius:3px;border:1px solid #bccfe6;background:linear-gradient(#e6edf6 0%,#d8e2ef 12%,#cad8ea 45%,#cddbed 70%,#d5e3f2 80%);overflow:hidden"><div class="a" style="left:0;top:69px;width:100%;height:17px;background:linear-gradient(#c6daf0,#bfd5ee)"></div></div>
<div class="t" style="left:207.0px;top:125px;width:120px;text-align:center;font-size:11px;color:#4f6d99">Шрифт</div>
<svg class="a" style="left:356px;top:124px" width="9" height="9" viewBox="0 0 9 9"><rect x="0.5" y="0.5" width="7" height="7" fill="none" stroke="#8ba5c6"/><path d="M3 3 L7 7 M7 4.5 V7 H4.5" fill="none" stroke="#6c86aa"/></svg>
<div class="a" style="left:372px;top:51px;width:332px;height:87px;border-radius:3px;border:1px solid #bccfe6;background:linear-gradient(#e6edf6 0%,#d8e2ef 12%,#cad8ea 45%,#cddbed 70%,#d5e3f2 80%);overflow:hidden"><div class="a" style="left:0;top:69px;width:100%;height:17px;background:linear-gradient(#c6daf0,#bfd5ee)"></div></div>
<div class="t" style="left:469.5px;top:125px;width:120px;text-align:center;font-size:11px;color:#4f6d99">Выравнивание</div>
<svg class="a" style="left:691px;top:124px" width="9" height="9" viewBox="0 0 9 9"><rect x="0.5" y="0.5" width="7" height="7" fill="none" stroke="#8ba5c6"/><path d="M3 3 L7 7 M7 4.5 V7 H4.5" fill="none" stroke="#6c86aa"/></svg>
<div class="a" style="left:707px;top:51px;width:130px;height:87px;border-radius:3px;border:1px solid #bccfe6;background:linear-gradient(#e6edf6 0%,#d8e2ef 12%,#cad8ea 45%,#cddbed 70%,#d5e3f2 80%);overflow:hidden"><div class="a" style="left:0;top:69px;width:100%;height:17px;background:linear-gradient(#c6daf0,#bfd5ee)"></div></div>
<div class="t" style="left:703.5px;top:125px;width:120px;text-align:center;font-size:11px;color:#4f6d99">Число</div>
<svg class="a" style="left:824px;top:124px" width="9" height="9" viewBox="0 0 9 9"><rect x="0.5" y="0.5" width="7" height="7" fill="none" stroke="#8ba5c6"/><path d="M3 3 L7 7 M7 4.5 V7 H4.5" fill="none" stroke="#6c86aa"/></svg>
<div class="a" style="left:840px;top:51px;width:230px;height:87px;border-radius:3px;border:1px solid #bccfe6;background:linear-gradient(#e6edf6 0%,#d8e2ef 12%,#cad8ea 45%,#cddbed 70%,#d5e3f2 80%);overflow:hidden"><div class="a" style="left:0;top:69px;width:100%;height:17px;background:linear-gradient(#c6daf0,#bfd5ee)"></div></div>
<div class="t" style="left:895.0px;top:125px;width:120px;text-align:center;font-size:11px;color:#4f6d99">Стили</div>
<div class="a" style="left:1073px;top:51px;width:139px;height:87px;border-radius:3px;border:1px solid #bccfe6;background:linear-gradient(#e6edf6 0%,#d8e2ef 12%,#cad8ea 45%,#cddbed 70%,#d5e3f2 80%);overflow:hidden"><div class="a" style="left:0;top:69px;width:100%;height:17px;background:linear-gradient(#c6daf0,#bfd5ee)"></div></div>
<div class="t" style="left:1082.5px;top:125px;width:120px;text-align:center;font-size:11px;color:#4f6d99">Ячейки</div>
<div class="a" style="left:1215px;top:51px;width:217px;height:87px;border-radius:3px;border:1px solid #bccfe6;background:linear-gradient(#e6edf6 0%,#d8e2ef 12%,#cad8ea 45%,#cddbed 70%,#d5e3f2 80%);overflow:hidden"><div class="a" style="left:0;top:69px;width:100%;height:17px;background:linear-gradient(#c6daf0,#bfd5ee)"></div></div>
<div class="t" style="left:1263.5px;top:125px;width:120px;text-align:center;font-size:11px;color:#4f6d99">Редактирование</div>
<svg class="a" style="left:17px;top:57px" width="24" height="28" viewBox="0 0 24 28"><rect x="1" y="3" width="14" height="18" fill="#eef1f5" stroke="#c9d1dc"/><rect x="5" y="1" width="6" height="4" fill="#dde3ea" stroke="#c2cad6"/><rect x="8" y="9" width="13" height="16" fill="#f8f9fb" stroke="#cdd5df"/></svg>
<div class="t" style="left:8px;top:94px;font-size:11px;color:#30466a;">Вставить</div>
<div class="a" style="left:25.5px;top:111px;width:0;height:0;border-left:2.5px solid transparent;border-right:2.5px solid transparent;border-top:3px solid #4a5a70"></div>
<svg class="a" style="left:57px;top:57px" width="12" height="12" viewBox="0 0 12 12"><path d="M3 1 L7 8 M9 1 L5 8" stroke="#5a6f8c" stroke-width="1.2"/><circle cx="3.5" cy="9" r="2" fill="none" stroke="#3d6fc0" stroke-width="1.4"/><circle cx="8.5" cy="9" r="2" fill="none" stroke="#3d6fc0" stroke-width="1.4"/></svg>
<div class="t" style="left:74px;top:58.5px;font-size:11px;color:#30466a;letter-spacing:-0.3px">Вырезать</div>
<svg class="a" style="left:56px;top:79px" width="14" height="12" viewBox="0 0 14 12"><rect x="0.5" y="0.5" width="7" height="8" fill="#fff" stroke="#7a8aa0"/><rect x="5.5" y="3.5" width="7" height="8" fill="#fff" stroke="#5c7fb0"/><path d="M7 6 H11 M7 8 H11" stroke="#7b9ccc"/></svg>
<div class="t" style="left:74px;top:80px;font-size:11px;color:#30466a;">Копировать</div>
<svg class="a" style="left:56px;top:100px" width="15" height="14" viewBox="0 0 15 14"><path d="M9 1 L14 6 L11 8 L6 3Z" fill="#6a7aa8"/><path d="M6 4 L10 8 L5 13 L1 11 Z" fill="#e8c35a" stroke="#a88a3a" stroke-width="0.6"/></svg>
<div class="t" style="left:74px;top:102px;font-size:11px;color:#30466a;">Формат по образцу</div>
<div class="a" style="left:186px;top:61px;width:87px;height:21px;background:#f7fafd;border:1px solid #c8d7ea"></div>
<div class="a" style="left:273px;top:61px;width:45px;height:21px;background:#f7fafd;border:1px solid #c8d7ea"></div>
<div class="t" style="left:188px;top:66px;font-size:11px;color:#1a1a1a;letter-spacing:-0.1px">Times New Roı</div>
<div class="a" style="left:264.5px;top:71px;width:0;height:0;border-left:2.5px solid transparent;border-right:2.5px solid transparent;border-top:3px solid #4a5a70"></div>
<div class="t" style="left:277px;top:66px;font-size:11px;color:#1a1a1a;">10</div>
<div class="a" style="left:309.5px;top:71px;width:0;height:0;border-left:2.5px solid transparent;border-right:2.5px solid transparent;border-top:3px solid #4a5a70"></div>
<div class="a" style="left:322px;top:61px;width:43px;height:21px;border-radius:2px;border:1px solid #c3d3e8;background:linear-gradient(#e6eef8,#d6e2f1)"></div>
<div class="t" style="left:327px;top:64.5px;font-family:'Liberation Serif',serif;font-size:15px;font-weight:bold;color:#1f2a3a">A</div>
<div class="t" style="left:350px;top:68.5px;font-family:'Liberation Serif',serif;font-size:11px;font-weight:bold;color:#1f2a3a">A</div>
<div class="a" style="left:336.5px;top:64px;width:0;height:0;border-left:2.5px solid transparent;border-right:2.5px solid transparent;border-top:3px solid #1f2a3a"></div>
<div class="a" style="left:357.5px;top:64px;width:0;height:0;border-left:2.5px solid transparent;border-right:2.5px solid transparent;border-top:3px solid #1f2a3a"></div>
<div class="a" style="left:186px;top:92px;width:76px;height:20px;border-radius:2px;border:1px solid #c3d3e8;background:linear-gradient(#e6eef8,#d6e2f1)"></div>
<div class="a" style="left:266px;top:92px;width:33px;height:20px;border-radius:2px;border:1px solid #c3d3e8;background:linear-gradient(#e6eef8,#d6e2f1)"></div>
<div class="a" style="left:303px;top:92px;width:62px;height:20px;border-radius:2px;border:1px solid #c3d3e8;background:linear-gradient(#e6eef8,#d6e2f1)"></div>
<div class="t" style="left:191px;top:96px;font-size:12px;font-weight:bold;color:#111">Ж</div>
<div class="t" style="left:214px;top:96px;font-size:12px;font-weight:bold;font-style:italic;color:#111;font-family:'Liberation Serif',serif">К</div>
<div class="t" style="left:237px;top:95px;font-size:12px;font-weight:bold;color:#111;font-family:'Liberation Serif',serif;text-decoration:underline">Ч</div>
<div class="a" style="left:255.5px;top:101px;width:0;height:0;border-left:2.5px solid transparent;border-right:2.5px solid transparent;border-top:3px solid #4a5a70"></div>
<svg class="a" style="left:271px;top:95px" width="13" height="13" viewBox="0 0 13 13"><rect x="1.5" y="1.5" width="10" height="10" fill="none" stroke="#aab6c6" stroke-dasharray="1 1"/><path d="M6.5 1.5 V11.5 M1.5 6.5 H11.5" stroke="#aab6c6" stroke-dasharray="1 1"/><rect x="1" y="11" width="11" height="1.5" fill="#5a6a80"/></svg>
<div class="a" style="left:290.5px;top:101px;width:0;height:0;border-left:2.5px solid transparent;border-right:2.5px solid transparent;border-top:3px solid #4a5a70"></div>
<svg class="a" style="left:306px;top:94px" width="16" height="17" viewBox="0 0 16 17"><path d="M5 2 L11 7 L7 11 L2 7Z" fill="#fff" stroke="#6a7688"/><path d="M11 7 Q14 9 13 11" fill="none" stroke="#3b6fc4" stroke-width="1.6"/><rect x="1" y="13" width="14" height="4" fill="#f5f500"/></svg>
<div class="a" style="left:325.5px;top:101px;width:0;height:0;border-left:2.5px solid transparent;border-right:2.5px solid transparent;border-top:3px solid #4a5a70"></div>
<div class="t" style="left:339px;top:93px;font-size:13px;font-weight:bold;color:#2a4f9a;font-family:'Liberation Serif',serif">A</div>
<div class="a" style="left:337px;top:107px;width:15px;height:4px;background:#e0101a"></div>
<div class="a" style="left:357.5px;top:101px;width:0;height:0;border-left:2.5px solid transparent;border-right:2.5px solid transparent;border-top:3px solid #4a5a70"></div>
<div class="a" style="left:375px;top:61px;width:67px;height:21px;border-radius:2px;border:1px solid #c3d3e8;background:linear-gradient(#e6eef8,#d6e2f1)"></div>
<div class="a" style="left:445px;top:61px;width:30px;height:21px;border-radius:2px;border:1px solid #c3d3e8;background:linear-gradient(#e6eef8,#d6e2f1)"></div>
<div class="a" style="left:375px;top:91px;width:67px;height:21px;border-radius:2px;border:1px solid #c3d3e8;background:linear-gradient(#e6eef8,#d6e2f1)"></div>
<div class="a" style="left:445px;top:91px;width:43px;height:21px;border-radius:2px;border:1px solid #c3d3e8;background:linear-gradient(#e6eef8,#d6e2f1)"></div>
<div class="a" style="left:420px;top:62px;width:21px;height:19px;background:linear-gradient(#fde7a8,#f9c25a)"></div>
<svg class="a" style="left:380px;top:66px" width="14" height="12" viewBox="0 0 14 12"><rect x="0" y="0.0" width="11" height="1.4" fill="#2a2f3a"/><rect x="0" y="2.5" width="11" height="1.4" fill="#2a2f3a"/></svg>
<svg class="a" style="left:402px;top:69px" width="14" height="12" viewBox="0 0 14 12"><rect x="0" y="0.0" width="11" height="1.4" fill="#2a2f3a"/><rect x="0" y="2.5" width="11" height="1.4" fill="#2a2f3a"/></svg>
<svg class="a" style="left:425px;top:71px" width="14" height="12" viewBox="0 0 14 12"><rect x="0" y="0.0" width="11" height="1.4" fill="#2a2f3a"/><rect x="0" y="2.5" width="11" height="1.4" fill="#2a2f3a"/></svg>
<svg class="a" style="left:380px;top:97px" width="14" height="12" viewBox="0 0 14 12"><rect x="0" y="0.0" width="11" height="1.4" fill="#2a2f3a"/><rect x="0" y="2.5" width="8" height="1.4" fill="#2a2f3a"/><rect x="0" y="5.0" width="11" height="1.4" fill="#2a2f3a"/><rect x="0" y="7.5" width="8" height="1.4" fill="#2a2f3a"/></svg>
<svg class="a" style="left:403px;top:97px" width="14" height="12" viewBox="0 0 14 12"><rect x="0" y="0.0" width="11" height="1.4" fill="#2a2f3a"/><rect x="2" y="2.5" width="7" height="1.4" fill="#2a2f3a"/><rect x="0" y="5.0" width="11" height="1.4" fill="#2a2f3a"/><rect x="2" y="7.5" width="7" height="1.4" fill="#2a2f3a"/></svg>
<svg class="a" style="left:425px;top:97px" width="14" height="12" viewBox="0 0 14 12"><rect x="0" y="0.0" width="11" height="1.4" fill="#2a2f3a"/><rect x="3" y="2.5" width="8" height="1.4" fill="#2a2f3a"/><rect x="0" y="5.0" width="11" height="1.4" fill="#2a2f3a"/><rect x="3" y="7.5" width="8" height="1.4" fill="#2a2f3a"/></svg>
<svg class="a" style="left:450px;top:64px" width="14" height="14" viewBox="0 0 14 14"><path d="M2 4 L9 11 M4 2 L11 9 M1 8 L6 13" stroke="#2a2f3a" stroke-width="1.3"/><path d="M9 4 L12 5 L10 7" fill="none" stroke="#3b6fc4" stroke-width="1.2"/></svg>
<div class="a" style="left:467.5px;top:70px;width:0;height:0;border-left:2.5px solid transparent;border-right:2.5px solid transparent;border-top:3px solid #4a5a70"></div>
<svg class="a" style="left:450px;top:96px" width="14" height="12" viewBox="0 0 14 12"><rect x="5" y="0" width="8" height="1.4" fill="#2a2f3a"/><rect x="5" y="3" width="8" height="1.4" fill="#2a2f3a"/><rect x="5" y="6" width="8" height="1.4" fill="#2a2f3a"/><rect x="5" y="9" width="8" height="1.4" fill="#2a2f3a"/><path d="M0 5 L3 3 V7Z" fill="#3b6fc4"/></svg>
<svg class="a" style="left:472px;top:96px" width="14" height="12" viewBox="0 0 14 12"><rect x="5" y="0" width="8" height="1.4" fill="#2a2f3a"/><rect x="5" y="3" width="8" height="1.4" fill="#2a2f3a"/><rect x="5" y="6" width="8" height="1.4" fill="#2a2f3a"/><rect x="5" y="9" width="8" height="1.4" fill="#2a2f3a"/><path d="M4 5 L1 3 V7Z" fill="#3b6fc4"/></svg>
<div class="a" style="left:493px;top:62px;width:1px;height:50px;background:#b7c9df"></div>
<svg class="a" style="left:499px;top:64px" width="15" height="15" viewBox="0 0 15 15"><rect x="0.5" y="0.5" width="11" height="13" fill="#f4f6f9" stroke="#8a98ab"/><path d="M2 3 H9 M2 6 H9 M2 9 H7" stroke="#5a6a80"/><path d="M12 4 V10 L10 8" fill="none" stroke="#3b6fc4" stroke-width="1.2"/></svg>
<div class="t" style="left:517px;top:67px;font-size:11px;color:#30466a;">Перенос текста</div>
<svg class="a" style="left:499px;top:94px" width="15" height="15" viewBox="0 0 15 15"><rect x="0.5" y="0.5" width="13" height="13" fill="#f4f6f9" stroke="#8a98ab"/><path d="M0.5 4.5 H13.5 M0.5 9.5 H13.5" stroke="#8a98ab"/><path d="M3 7 H11 M3 7 L5 5.5 M11 7 L9 5.5" stroke="#3b6fc4" stroke-width="1"/></svg>
<div class="t" style="left:517px;top:97px;font-size:11px;color:#30466a;letter-spacing:-0.12px">Объединить и поместить в центре</div>
<div class="a" style="left:692.5px;top:101px;width:0;height:0;border-left:2.5px solid transparent;border-right:2.5px solid transparent;border-top:3px solid #4a5a70"></div>
<div class="a" style="left:711px;top:61px;width:122px;height:22px;background:#f7fafd;border:1px solid #c8d7ea"></div>
<div class="t" style="left:713px;top:66px;font-size:11px;color:#1a1a1a;">Общий</div>
<div class="a" style="left:824.5px;top:71px;width:0;height:0;border-left:2.5px solid transparent;border-right:2.5px solid transparent;border-top:3px solid #4a5a70"></div>
<div class="a" style="left:711px;top:91px;width:77px;height:22px;border-radius:2px;border:1px solid #c3d3e8;background:linear-gradient(#e6eef8,#d6e2f1)"></div>
<div class="a" style="left:791px;top:91px;width:43px;height:22px;border-radius:2px;border:1px solid #c3d3e8;background:linear-gradient(#e6eef8,#d6e2f1)"></div>
<svg class="a" style="left:714px;top:95px" width="15" height="14" viewBox="0 0 15 14"><rect x="0" y="0" width="12" height="8" fill="#5b7fc8"/><rect x="3" y="5" width="11" height="8" fill="#e9c43c"/><text x="7" y="7" font-size="6" fill="#fff" font-family="Liberation Sans">$</text></svg>
<div class="a" style="left:734.5px;top:101px;width:0;height:0;border-left:2.5px solid transparent;border-right:2.5px solid transparent;border-top:3px solid #4a5a70"></div>
<div class="t" style="left:747px;top:95px;font-size:12px;color:#333;">%</div>
<div class="t" style="left:768px;top:96px;font-size:10.5px;color:#333;letter-spacing:-0.3px">000</div>
<svg class="a" style="left:795px;top:95px" width="16" height="15" viewBox="0 0 16 15"><text x="6" y="7" font-size="7" fill="#222" font-family="Liberation Sans">0</text><text x="4" y="14" font-size="7" fill="#222" font-family="Liberation Sans">,00</text><path d="M0 4 H5 M0 4 L2 2.5" stroke="#3b6fc4"/></svg>
<svg class="a" style="left:817px;top:95px" width="16" height="15" viewBox="0 0 16 15"><text x="4" y="7" font-size="7" fill="#222" font-family="Liberation Sans">,00</text><text x="8" y="14" font-size="7" fill="#222" font-family="Liberation Sans">,0</text><path d="M1 11 H6 M6 11 L4 9.5" stroke="#3b6fc4"/></svg>
<svg class="a" style="left:879px;top:59px" width="26" height="24" viewBox="0 0 26 24"><rect x="0.5" y="0.5" width="5" height="4.5" fill="#fff" stroke="#aab4c4" stroke-width="0.6"/><rect x="6.5" y="0.5" width="5" height="4.5" fill="#fff" stroke="#aab4c4" stroke-width="0.6"/><rect x="12.5" y="0.5" width="5" height="4.5" fill="#fff" stroke="#aab4c4" stroke-width="0.6"/><rect x="18.5" y="0.5" width="5" height="4.5" fill="#fff" stroke="#aab4c4" stroke-width="0.6"/><rect x="0.5" y="6.0" width="5" height="4.5" fill="#fff" stroke="#aab4c4" stroke-width="0.6"/><rect x="6.5" y="6.0" width="5" height="4.5" fill="#fff" stroke="#aab4c4" stroke-width="0.6"/><rect x="12.5" y="6.0" width="5" height="4.5" fill="#fff" stroke="#aab4c4" stroke-width="0.6"/><rect x="18.5" y="6.0" width="5" height="4.5" fill="#fff" stroke="#aab4c4" stroke-width="0.6"/><rect x="0.5" y="11.5" width="5" height="4.5" fill="#fff" stroke="#aab4c4" stroke-width="0.6"/><rect x="6.5" y="11.5" width="5" height="4.5" fill="#fff" stroke="#aab4c4" stroke-width="0.6"/><rect x="12.5" y="11.5" width="5" height="4.5" fill="#fff" stroke="#aab4c4" stroke-width="0.6"/><rect x="18.5" y="11.5" width="5" height="4.5" fill="#fff" stroke="#aab4c4" stroke-width="0.6"/><rect x="0.5" y="17.0" width="5" height="4.5" fill="#fff" stroke="#aab4c4" stroke-width="0.6"/><rect x="6.5" y="17.0" width="5" height="4.5" fill="#fff" stroke="#aab4c4" stroke-width="0.6"/><rect x="12.5" y="17.0" width="5" height="4.5" fill="#fff" stroke="#aab4c4" stroke-width="0.6"/><rect x="18.5" y="17.0" width="5" height="4.5" fill="#fff" stroke="#aab4c4" stroke-width="0.6"/><rect x="6.5" y="0.5" width="5" height="4.5" fill="#d43c3c"/><rect x="6.5" y="11.5" width="5" height="4.5" fill="#d43c3c"/><rect x="6.5" y="6" width="11" height="4.5" fill="#5a82d0"/><rect x="14" y="12" width="10" height="11" fill="#f4f4f4" stroke="#555" stroke-width="0.7"/><path d="M16 15 H22 M16 18 H22 M16 21 H22" stroke="#333" stroke-width="0.8"/></svg>
<div class="t" style="left:852px;top:94px;width:80px;text-align:center;font-size:11px;color:#30466a;">Условное</div>
<div class="t" style="left:842px;top:108px;width:100px;text-align:center;font-size:11px;color:#30466a;letter-spacing:-0.1px">форматирование <span style="display:inline-block;width:0;height:0;border-left:2.5px solid transparent;border-right:2.5px solid transparent;border-top:3px solid #5a6a82;vertical-align:3px;margin-left:1px"></span></div>
<svg class="a" style="left:970px;top:59px" width="27" height="24" viewBox="0 0 27 24"><rect x="0.5" y="0.5" width="5" height="4.5" fill="#fff" stroke="#aab4c4" stroke-width="0.6"/><rect x="6.5" y="0.5" width="5" height="4.5" fill="#fff" stroke="#aab4c4" stroke-width="0.6"/><rect x="12.5" y="0.5" width="5" height="4.5" fill="#fff" stroke="#aab4c4" stroke-width="0.6"/><rect x="18.5" y="0.5" width="5" height="4.5" fill="#fff" stroke="#aab4c4" stroke-width="0.6"/><rect x="0.5" y="6.0" width="5" height="4.5" fill="#fff" stroke="#aab4c4" stroke-width="0.6"/><rect x="6.5" y="6.0" width="5" height="4.5" fill="#fff" stroke="#aab4c4" stroke-width="0.6"/><rect x="12.5" y="6.0" width="5" height="4.5" fill="#fff" stroke="#aab4c4" stroke-width="0.6"/><rect x="18.5" y="6.0" width="5" height="4.5" fill="#fff" stroke="#aab4c4" stroke-width="0.6"/><rect x="0.5" y="11.5" width="5" height="4.5" fill="#fff" stroke="#aab4c4" stroke-width="0.6"/><rect x="6.5" y="11.5" width="5" height="4.5" fill="#fff" stroke="#aab4c4" stroke-width="0.6"/><rect x="12.5" y="11.5" width="5" height="4.5" fill="#fff" stroke="#aab4c4" stroke-width="0.6"/><rect x="18.5" y="11.5" width="5" height="4.5" fill="#fff" stroke="#aab4c4" stroke-width="0.6"/><rect x="0.5" y="17.0" width="5" height="4.5" fill="#fff" stroke="#aab4c4" stroke-width="0.6"/><rect x="6.5" y="17.0" width="5" height="4.5" fill="#fff" stroke="#aab4c4" stroke-width="0.6"/><rect x="12.5" y="17.0" width="5" height="4.5" fill="#fff" stroke="#aab4c4" stroke-width="0.6"/><rect x="18.5" y="17.0" width="5" height="4.5" fill="#fff" stroke="#aab4c4" stroke-width="0.6"/><rect x="6" y="6" width="17" height="16" fill="#8eb0e8" opacity="0.8"/><path d="M26 2 L14 22" stroke="#6b5a3a" stroke-width="2.5"/><path d="M14 19 L12 23 L16 21Z" fill="#3a6ac0"/></svg>
<div class="t" style="left:933px;top:94px;width:100px;text-align:center;font-size:11px;color:#30466a;letter-spacing:-0.15px">Форматировать</div>
<div class="t" style="left:933px;top:108px;width:100px;text-align:center;font-size:11px;color:#30466a;">как таблицу <span style="display:inline-block;width:0;height:0;border-left:2.5px solid transparent;border-right:2.5px solid transparent;border-top:3px solid #5a6a82;vertical-align:3px;margin-left:1px"></span></div>
<svg class="a" style="left:1033px;top:59px" width="27" height="24" viewBox="0 0 27 24"><rect x="0.5" y="0.5" width="24" height="20" fill="#fff" stroke="#9aa6b8"/><rect x="3" y="4" width="19" height="13" fill="#8eb0e8"/><path d="M26 2 L15 20" stroke="#6b5a3a" stroke-width="2.5"/><path d="M15 17 L13 22 L17 19Z" fill="#3a6ac0"/></svg>
<div class="t" style="left:1016px;top:94px;width:60px;text-align:center;font-size:11px;color:#30466a;">Стили</div>
<div class="t" style="left:1016px;top:108px;width:60px;text-align:center;font-size:11px;color:#30466a;">ячеек <span style="display:inline-block;width:0;height:0;border-left:2.5px solid transparent;border-right:2.5px solid transparent;border-top:3px solid #5a6a82;vertical-align:3px;margin-left:1px"></span></div>
<svg class="a" style="left:1086px;top:59px" width="27" height="24" viewBox="0 0 27 24"><rect x="0.5" y="0.5" width="11" height="4" fill="#fff" stroke="#8a96a8"/><rect x="0.5" y="12.5" width="11" height="10" fill="#fff" stroke="#8a96a8"/><path d="M0.5 17.5 H11.5 M6 12.5 V22.5" stroke="#8a96a8"/><rect x="12" y="7" width="13" height="5" fill="#7ea2dc" stroke="#4d73b8" stroke-width="0.7"/><path d="M3 9.5 H11 M3 9.5 L5 8 M3 9.5 L5 11" stroke="#3b5a90"/></svg>
<div class="t" style="left:1069px;top:94px;width:60px;text-align:center;font-size:11px;color:#30466a;letter-spacing:-0.3px">Вставить</div>
<div class="a" style="left:1096.5px;top:110px;width:0;height:0;border-left:2.5px solid transparent;border-right:2.5px solid transparent;border-top:3px solid #4a5a70"></div>
<svg class="a" style="left:1131px;top:59px" width="26" height="24" viewBox="0 0 26 24"><rect x="0.5" y="0.5" width="11" height="4" fill="#fff" stroke="#8a96a8"/><rect x="0.5" y="12.5" width="11" height="10" fill="#fff" stroke="#8a96a8"/><path d="M0.5 17.5 H11.5 M6 12.5 V22.5" stroke="#8a96a8"/><rect x="2" y="6" width="9" height="5" fill="#fff" stroke="#8a96a8"/><path d="M13 4 L19 10 M19 4 L13 10" stroke="#e23a2a" stroke-width="1.6"/></svg>
<div class="t" style="left:1114px;top:94px;width:60px;text-align:center;font-size:11px;color:#30466a;letter-spacing:-0.3px">Удалить</div>
<div class="a" style="left:1141.5px;top:110px;width:0;height:0;border-left:2.5px solid transparent;border-right:2.5px solid transparent;border-top:3px solid #4a5a70"></div>
<svg class="a" style="left:1175px;top:57px" width="26" height="26" viewBox="0 0 26 26"><rect x="0.5" y="3.5" width="23" height="19" fill="#fff" stroke="#8a96a8"/><path d="M6.5 3.5 V22.5 M17.5 3.5 V22.5 M0.5 9.5 H23.5 M0.5 15.5 H23.5" stroke="#aab4c4"/><rect x="8" y="8" width="8" height="9" fill="#5a82d0"/><path d="M6 1 H18" stroke="#555"/></svg>
<div class="t" style="left:1158px;top:94px;width:60px;text-align:center;font-size:11px;color:#30466a;letter-spacing:-0.2px">Формат</div>
<div class="a" style="left:1185.5px;top:110px;width:0;height:0;border-left:2.5px solid transparent;border-right:2.5px solid transparent;border-top:3px solid #4a5a70"></div>
<div class="t" style="left:1225px;top:57px;font-size:12px;font-weight:bold;color:#222">Σ</div>
<div class="t" style="left:1240px;top:58.5px;font-size:11px;color:#30466a;">Автосумма <span style="display:inline-block;width:0;height:0;border-left:2.5px solid transparent;border-right:2.5px solid transparent;border-top:3px solid #5a6a82;vertical-align:3px;margin-left:1px"></span></div>
<svg class="a" style="left:1222px;top:77px" width="13" height="15" viewBox="0 0 13 15"><rect x="0.5" y="0.5" width="11" height="13" fill="#dce6f5" stroke="#6c8cc0"/><path d="M6 3 V10 M3 7 L6 10.5 L9 7" fill="none" stroke="#3a6ac0" stroke-width="1.6"/></svg>
<div class="t" style="left:1240px;top:80px;font-size:11px;color:#30466a;">Заполнить <span style="display:inline-block;width:0;height:0;border-left:2.5px solid transparent;border-right:2.5px solid transparent;border-top:3px solid #5a6a82;vertical-align:3px;margin-left:1px"></span></div>
<svg class="a" style="left:1221px;top:100px" width="16" height="12" viewBox="0 0 16 12"><path d="M2 8 L9 1 L15 5 L9 11 H4Z" fill="#f5f5f5" stroke="#6b7585"/><path d="M1 11.5 H14" stroke="#6b7585"/></svg>
<div class="t" style="left:1240px;top:102px;font-size:11px;color:#30466a;">Очистить <span style="display:inline-block;width:0;height:0;border-left:2.5px solid transparent;border-right:2.5px solid transparent;border-top:3px solid #5a6a82;vertical-align:3px;margin-left:1px"></span></div>
<svg class="a" style="left:1322px;top:57px" width="30" height="27" viewBox="0 0 30 27"><path d="M11 5 H28 L21 13 V22 L17 25 V13Z" fill="#c9ced6" stroke="#9aa3b0" stroke-width="0.6"/><path d="M13 6 H26 L20 12Z" fill="#e6e9ee"/><text x="3" y="14" font-size="13" font-weight="bold" fill="#3557a6" font-family='Liberation Sans'>A</text><text x="2.5" y="26" font-size="13" font-weight="bold" fill="#b8402e" font-family='Liberation Sans'>Я</text></svg>
<div class="t" style="left:1298px;top:94px;width:80px;text-align:center;font-size:11px;color:#30466a;">Сортировка</div>
<div class="t" style="left:1298px;top:108px;width:80px;text-align:center;font-size:11px;color:#30466a;">и фильтр <span style="display:inline-block;width:0;height:0;border-left:2.5px solid transparent;border-right:2.5px solid transparent;border-top:3px solid #5a6a82;vertical-align:3px;margin-left:1px"></span></div>
<svg class="a" style="left:1386px;top:58px" width="25" height="25" viewBox="0 0 25 25"><defs><linearGradient id="bg1" x1="0" x2="1"><stop offset="0" stop-color="#5f73a6"/><stop offset="0.45" stop-color="#b9c6e2"/><stop offset="1" stop-color="#51659a"/></linearGradient></defs><rect x="4" y="2" width="6" height="7" rx="1.5" fill="url(#bg1)"/><rect x="15" y="2" width="6" height="7" rx="1.5" fill="url(#bg1)"/><rect x="1" y="8" width="10" height="16" rx="2" fill="url(#bg1)"/><rect x="14" y="8" width="10" height="16" rx="2" fill="url(#bg1)"/><rect x="10" y="10" width="5" height="6" fill="#3f4f80"/><path d="M1 14 H11 M14 14 H24" stroke="#46588c" stroke-width="0.8"/></svg>
<div class="t" style="left:1359px;top:94px;width:80px;text-align:center;font-size:11px;color:#30466a;">Найти и</div>
<div class="t" style="left:1359px;top:108px;width:80px;text-align:center;font-size:11px;color:#30466a;">выделить <span style="display:inline-block;width:0;height:0;border-left:2.5px solid transparent;border-right:2.5px solid transparent;border-top:3px solid #5a6a82;vertical-align:3px;margin-left:1px"></span></div>
<div class="a" style="left:0;top:139px;width:1600px;height:2px;background:linear-gradient(#a7bcd6,#c6d7ec)"></div>
<div class="t" style="left:47px;top:147px;font-size:12.5px;color:#111;">R8C26</div>
<div class="a" style="left:136px;top:151px;width:0;height:0;border-left:4.5px solid transparent;border-right:4.5px solid transparent;border-top:5px solid #111"></div>
<div class="a" style="left:151px;top:142px;width:85px;height:22px;background:#fff"></div>
<div class="a" style="left:151px;top:142px;width:85px;height:22px;border-radius:11px 0 0 11px;background:linear-gradient(#e8eff8,#c4d4ea 60%,#b7c9e2);border:1px solid #b0c2d9;border-right:none"></div>
<div class="a" style="left:158px;top:147px;width:6px;height:6px;border-radius:50%;border:1px solid #9aaac0;border-right-color:transparent;border-bottom-color:transparent"></div>
<div class="t" style="left:216px;top:146px;font-family:'Liberation Serif',serif;font-style:italic;font-weight:bold;font-size:14px;color:#3a3f4a;letter-spacing:-1px">f<span style="font-size:12px">x</span></div>
<div class="a" style="left:1584px;top:142px;width:15px;height:22px;background:linear-gradient(#c9daf0,#a3bde0);border:1px solid #8ea6c6"></div>
<svg class="a" style="left:1586px;top:146px" width="11" height="13" viewBox="0 0 11 13"><path d="M1.5 1.5 L5.5 5 L9.5 1.5 M1.5 6 L5.5 9.5 L9.5 6" fill="none" stroke="#111" stroke-width="1.6"/></svg>
<div class="a" style="left:0;top:163px;width:1584px;height:4px;border-top:1px solid #9eacbc;border-bottom:1px solid #abbacb;background:#d8e6f3"></div>
<div class="a" style="left:1584px;top:167px;width:16px;height:652px;background:linear-gradient(90deg,#8ea9d1,#9cb5d9)"></div>
<div class="a" style="left:1586px;top:168px;width:12px;height:6px;background:#fff;border:1px solid #8aa0bc"></div>
<div class="a" style="left:1585px;top:174px;width:14px;height:18px;background:linear-gradient(#93acd2,#86a2cc)"></div>
<div class="a" style="left:1588px;top:183px;width:0;height:0;border-left:4px solid transparent;border-right:4px solid transparent;border-bottom:4px solid #3f5a86"></div>
<div class="a" style="left:1585px;top:193px;width:14px;height:208px;border-radius:2px;background:linear-gradient(90deg,#d2dae6,#eef1f6 40%,#d8dfe9);border:1px solid #8aa0bd"></div>
<div class="a" style="left:1588px;top:294px;width:8px;height:1px;background:#8fa2bd;box-shadow:0 2px 0 #8fa2bd,0 4px 0 #8fa2bd"></div>
<div class="a" style="left:1588px;top:808px;width:0;height:0;border-left:4px solid transparent;border-right:4px solid transparent;border-top:4px solid #3f5a86"></div>
<div class="a" style="left:0;top:819px;width:950px;height:17px;background:linear-gradient(#a4bcdc,#8fa9cf)"></div>
<div class="a" style="left:0;top:819px;width:66px;height:17px;background:linear-gradient(#dbe6f4,#c6d6ec)"></div>
<svg class="a" style="left:4px;top:822px" width="60" height="11" viewBox="0 0 60 11"><rect x="2" y="1" width="1.6" height="8" fill="#2d4f8a"/><path d="M9 1 L4 5 L9 9Z" fill="#2d4f8a"/><path d="M23 1 L18.5 5 L23 9Z" fill="#2d4f8a"/><path d="M34 1 L38.5 5 L34 9Z" fill="#2d4f8a"/><path d="M48 1 L53 5 L48 9Z" fill="#2d4f8a"/><rect x="53.5" y="1" width="1.6" height="8" fill="#2d4f8a"/></svg>
<svg class="a" style="left:64px;top:818px" width="100" height="19" viewBox="0 0 100 19"><path d="M1 0 V18 H52 L58 12 L70 0Z" fill="#fff"/><path d="M1 0 V18 H52 L70 0" fill="none" stroke="#93a8c6"/><path d="M58 18 L76 0 H96 L78 18Z" fill="#c9d8ec" stroke="#97acc9"/></svg>
<div class="t" style="left:74px;top:821px;font-size:13px;font-weight:bold;color:#263e66">Лист1</div>
<svg class="a" style="left:127px;top:820px" width="14" height="14" viewBox="0 0 14 14"><rect x="3" y="5" width="10" height="7" fill="#e6edf6" stroke="#6f84a3"/><circle cx="3" cy="3" r="2.5" fill="#f2c230"/></svg>
<div class="a" style="left:950px;top:820px;width:7px;height:16px;background:#fff;border:1px solid #90a6c4"></div>
<div class="a" style="left:957px;top:820px;width:19px;height:16px;background:#93aed4"></div>
<div class="a" style="left:963px;top:824px;width:0;height:0;border-top:4px solid transparent;border-bottom:4px solid transparent;border-right:4px solid #3f5a88"></div>
<div class="a" style="left:976px;top:820px;width:549px;height:16px;border-radius:2px;background:linear-gradient(#f0f3f8,#dfe6ee 50%,#c2cfdf);border:1px solid #8ea3c0"></div>
<div class="a" style="left:1248px;top:825px;width:1px;height:6px;background:#8a9bb5;box-shadow:2px 0 0 #8a9bb5,4px 0 0 #8a9bb5"></div>
<div class="a" style="left:1525px;top:820px;width:59px;height:16px;background:#93aed4"></div>
<div class="a" style="left:1565px;top:824px;width:0;height:0;border-top:4px solid transparent;border-bottom:4px solid transparent;border-left:4px solid #3f5a88"></div>
<div class="a" style="left:1577px;top:820px;width:6px;height:16px;background:#fff;border:1px solid #90a6c4"></div>
<div class="a" style="left:1584px;top:819px;width:16px;height:17px;background:#90abd2"></div>
<div class="a" style="left:0;top:836px;width:1600px;height:22px;border-top:1px solid #8fa3bb;background:linear-gradient(#e4eefb 0%,#cbdaf2 30%,#b9d4ee 55%,#d3e3f8 85%,#dce8f8 100%)"></div>
<div class="t" style="left:6px;top:842px;font-size:11.5px;color:#394a66">Готово</div>
<div class="a" style="left:47px;top:838px;width:1px;height:18px;background:#b8cbe2"></div>
<div class="a" style="left:1353px;top:836px;width:247px;height:22px;background:linear-gradient(#c7d8ef,#a9c2e4 50%,#bcd0ea)"></div>
<div class="a" style="left:1358px;top:839px;width:18px;height:16px;background:linear-gradient(#fde3a6,#f6c36c);border:1px solid #d9b27a"></div>
<svg class="a" style="left:1360px;top:841px" width="14" height="12" viewBox="0 0 14 12"><rect x="0.5" y="0.5" width="13" height="11" fill="#fff" stroke="#7a5a2a"/><path d="M0.5 4 H13.5 M0.5 7.5 H13.5 M5 0.5 V11.5 M9 0.5 V11.5" stroke="#7a5a2a"/></svg>
<svg class="a" style="left:1379px;top:841px" width="14" height="12" viewBox="0 0 14 12"><rect x="0.5" y="0.5" width="13" height="11" fill="#eef1f5" stroke="#6a7a92"/><rect x="3.5" y="2.5" width="7" height="7" fill="#fff" stroke="#8a98ab"/></svg>
<svg class="a" style="left:1398px;top:841px" width="14" height="12" viewBox="0 0 14 12"><rect x="0.5" y="0.5" width="13" height="11" fill="#d4dae2" stroke="#6a7a92"/><rect x="2" y="2" width="4" height="6" fill="#fff"/><rect x="8" y="2" width="4" height="6" fill="#fff"/></svg>
<div class="t" style="left:1423px;top:841px;font-size:11px;color:#243f70;">100%</div>
<svg class="a" style="left:1456px;top:839px" width="18" height="18" viewBox="0 0 18 18"><circle cx="9" cy="9" r="7.5" fill="#eef2f8" stroke="#7d8ea8"/><rect x="5" y="8.2" width="8" height="1.8" fill="#3a4a62"/></svg>
<div class="a" style="left:1474px;top:847px;width:104px;height:1px;background:#8ea2bf;box-shadow:0 1px 0 #eef3fa"></div>
<svg class="a" style="left:1520px;top:839px" width="11" height="15" viewBox="0 0 11 15"><path d="M0.5 0.5 H10.5 V9 L5.5 14 L0.5 9Z" fill="#eef2f7" stroke="#7d8ea8"/><path d="M5.5 4 V9" stroke="#9aa8bc"/></svg>
<svg class="a" style="left:1578px;top:839px" width="18" height="18" viewBox="0 0 18 18"><circle cx="9" cy="9" r="7.5" fill="#eef2f8" stroke="#7d8ea8"/><rect x="5" y="8.2" width="8" height="1.8" fill="#3a4a62"/><rect x="8.1" y="5" width="1.8" height="8" fill="#3a4a62"/></svg>
<div class="a" style="left:0;top:858px;width:1600px;height:42px;background:#03213d"></div>
<svg class="a" style="left:16px;top:870px" width="19" height="19" viewBox="0 0 19 19"><path d="M0 2.6 L7.6 1.5 V8.6 H0Z M8.6 1.4 L19 0 V8.6 H8.6Z M0 9.6 H7.6 V16.7 L0 15.6Z M8.6 9.6 H19 V18.2 L8.6 16.8Z" fill="#fff"/></svg>
<svg class="a" style="left:66px;top:866px" width="24" height="25" viewBox="0 0 24 25"><path d="M3 13 C3 4 10 1 15 1 C21 1 23 6 23 12 H8 C8 17 12 20 17 20 C19 20 21 19.5 22 19 V23 C20 24 18 24.5 15 24.5 C7 24.5 2 20 3 13Z M8 9 H18 C18 6 16 4 13 4 C10 4 8 6 8 9Z" fill="#1a7ad8"/></svg>
<svg class="a" style="left:119px;top:868px" width="24" height="22" viewBox="0 0 24 22"><path d="M0 3 H8 L10 5 H23 V21 H0Z" fill="#f6d45e"/><rect x="0" y="7" width="23" height="14" fill="#f9de7a"/><rect x="5" y="13" width="13" height="6" fill="#4a9fd8"/><rect x="8" y="16" width="7" height="5" fill="#2a7ab8"/></svg>
<div class="a" style="left:109px;top:897px;width:42px;height:3px;background:#7aaee0"></div>
<svg class="a" style="left:171px;top:866px" width="20" height="24" viewBox="0 0 20 24"><path d="M6 6 V4 C6 1 14 1 14 4 V6" fill="none" stroke="#fff" stroke-width="1.6"/><path d="M1 6 H19 V23 H1Z" fill="#fff"/><rect x="5" y="11" width="4.5" height="4" fill="#03213d"/><rect x="10.5" y="11" width="4.5" height="4" fill="#03213d"/><rect x="5" y="16" width="4.5" height="4" fill="#03213d"/><rect x="10.5" y="16" width="4.5" height="4" fill="#03213d"/></svg>
<svg class="a" style="left:220px;top:866px" width="26" height="24" viewBox="0 0 26 24"><ellipse cx="11" cy="14" rx="10" ry="8" fill="#dde3ea"/><circle cx="7" cy="11" r="2" fill="#d83a3a"/><circle cx="12" cy="9" r="2" fill="#3a8ad8"/><circle cx="6" cy="16" r="2" fill="#e8c030"/><path d="M24 1 L13 20" stroke="#c8a070" stroke-width="2.5"/></svg>
<svg class="a" style="left:273px;top:867px" width="24" height="24" viewBox="0 0 24 24"><circle cx="12" cy="12" r="11" fill="#db4437"/><path d="M12 12 L1.5 8.5 A11 11 0 0 0 12 23Z" fill="#0f9d58"/><path d="M12 12 L12 23 A11 11 0 0 0 22.5 8.5Z" fill="#f4b400"/><path d="M12 12 L22.5 8.5 A11 11 0 0 0 1.5 8.5Z" fill="#db4437"/><circle cx="12" cy="12" r="5" fill="#fff"/><circle cx="12" cy="12" r="3.8" fill="#4285f4"/></svg>
<div class="a" style="left:264px;top:897px;width:42px;height:3px;background:#7aaee0"></div>
<svg class="a" style="left:324px;top:866px" width="24" height="26" viewBox="0 0 24 26"><path d="M12 1.5 C19.5 1.5 22.5 5 22.5 11.5 C22.5 18 19.5 21 12 21 L10.5 21 L7 24.5 V20.3 C3 18.5 1.5 15.5 1.5 11.5 C1.5 5 4.5 1.5 12 1.5Z" fill="#c9b8ee" stroke="#7d5bc8" stroke-width="2.2"/><path d="M8.5 7.5 Q9.5 13.5 15.5 15.5" stroke="#fff" stroke-width="3.2" fill="none" stroke-linecap="round"/><path d="M13 6.5 Q16 7 16.5 10" stroke="#fff" stroke-width="1" fill="none"/></svg>
<div class="a" style="left:315px;top:897px;width:42px;height:3px;background:#7aaee0"></div>
<svg class="a" style="left:375px;top:866px" width="25" height="25" viewBox="0 0 25 25"><rect x="0.5" y="2.5" width="24" height="22" fill="#f2ecd8" stroke="#9a8a5a"/><rect x="0.5" y="0.5" width="24" height="4" fill="#c8b878"/><text x="2" y="18" font-size="14" font-weight="bold" fill="#c8802a" font-family='Liberation Serif'>Б</text><path d="M14 8 H23 M14 11 H23 M14 14 H23 M14 17 H23 M14 20 H23 M17 7 V22 M20 7 V22" stroke="#c87a9a" stroke-width="0.9"/></svg>
<div class="a" style="left:366px;top:897px;width:42px;height:3px;background:#7aaee0"></div>
<svg class="a" style="left:427px;top:867px" width="24" height="24" viewBox="0 0 24 24"><defs><radialGradient id="g1c" cx="0.45" cy="0.35" r="0.7"><stop offset="0" stop-color="#fff4c0"/><stop offset="0.6" stop-color="#f6c445"/><stop offset="1" stop-color="#e09a20"/></radialGradient></defs><circle cx="12" cy="12" r="11" fill="url(#g1c)"/><text x="3.5" y="16" font-size="10" font-weight="bold" fill="#d0301a" font-family='Liberation Sans'>1С</text><path d="M12 14 H21" stroke="#d0301a" stroke-width="2"/></svg>
<div class="a" style="left:417px;top:897px;width:42px;height:3px;background:#7aaee0"></div>
<div class="a" style="left:466px;top:858px;width:52px;height:42px;background:#15406e"></div>
<div class="a" style="left:468px;top:897px;width:45px;height:3px;background:#8cc0f0"></div>
<svg class="a" style="left:478px;top:866px" width="26" height="24" viewBox="0 0 26 24"><path d="M3 4 L20 1 V22 L3 20Z" fill="#cfe3c8" stroke="#8ab080" stroke-width="0.8"/><rect x="11" y="5" width="13" height="16" fill="#e9f3e4" stroke="#8ab080" stroke-width="0.8"/><path d="M11 9 H24 M11 13 H24 M11 17 H24 M17 5 V21" stroke="#7fae76" stroke-width="0.9"/><text x="5" y="15" font-size="11" font-weight="bold" fill="#1d6a2e" font-family='Liberation Sans'>X</text></svg>
<svg class="a" style="left:1189px;top:871px" width="18" height="18" viewBox="0 0 18 18"><circle cx="9" cy="9" r="8.5" fill="url(#g1c)"/><text x="2" y="12.5" font-size="8" font-weight="bold" fill="#d0301a" font-family='Liberation Sans'>1С</text><path d="M9 10.5 H16" stroke="#d0301a" stroke-width="1.5"/></svg>
<svg class="a" style="left:1214px;top:871px" width="17" height="18" viewBox="0 0 17 18"><path d="M8.5 1 C14 1 16 4 16 8.5 C16 13 14 15 8.5 15 L7 15 L4 17.5 V14.5 C1.5 13 1 11 1 8.5 C1 4 3 1 8.5 1Z" fill="#b8a4e4" stroke="#8a6ed0" stroke-width="1.2"/><path d="M6 5 C5.5 6 6 8 7.5 9.5 C9 11 10.5 11.5 11.5 11 L10.5 9.8 L9.5 10.2 C8.5 9.7 7.7 8.8 7.2 7.8 L7.6 6.8Z" fill="#fff"/></svg>
<svg class="a" style="left:1240px;top:871px" width="17" height="17" viewBox="0 0 17 17"><rect x="0" y="0" width="17" height="17" fill="#6a1010"/><path d="M3 14 C6 9 9 5 10 2 C11 6 13 10 15 12 C10 11 6 12 3 14Z" fill="none" stroke="#f0f0f0" stroke-width="1.1"/></svg>
<svg class="a" style="left:1265px;top:871px" width="17" height="17" viewBox="0 0 17 17"><rect x="0" y="0" width="17" height="17" rx="2" fill="#3f9ee0"/><rect x="3" y="4" width="11" height="8" fill="#a8d8f6"/></svg>
<svg class="a" style="left:1292px;top:870px" width="14" height="20" viewBox="0 0 14 20"><rect x="2.5" y="0.5" width="6" height="5" fill="none" stroke="#d8dde6"/><rect x="0.5" y="5.5" width="10" height="13" rx="1" fill="none" stroke="#d8dde6"/><path d="M12 15 L10 18" stroke="#d8dde6"/></svg>
<svg class="a" style="left:1318px;top:872px" width="10" height="15" viewBox="0 0 10 15"><path d="M1 4 L8 11 L4.5 14 V1 L8 4 L1 11" fill="none" stroke="#e8ecf2" stroke-width="1.1"/></svg>
<svg class="a" style="left:1339px;top:874px" width="22" height="12" viewBox="0 0 22 12"><rect x="4.5" y="2.5" width="16" height="8" fill="none" stroke="#e8ecf2"/><rect x="6" y="4" width="13" height="5" fill="#e8ecf2"/><rect x="0" y="0" width="4" height="4" fill="#e8ecf2"/></svg>
<svg class="a" style="left:1367px;top:871px" width="18" height="17" viewBox="0 0 18 17"><path d="M2 16 A14 14 0 0 1 16 2 M5 16 A11 11 0 0 1 16 5 M8 16 A8 8 0 0 1 16 8 M11 16 A5 5 0 0 1 16 11" fill="none" stroke="#c8d0dc" stroke-width="1.1"/><circle cx="15" cy="15" r="1.5" fill="#e8ecf2"/></svg>
<svg class="a" style="left:1392px;top:872px" width="18" height="15" viewBox="0 0 18 15"><path d="M1 5 H4 L8 1.5 V13.5 L4 10 H1Z" fill="none" stroke="#e8ecf2"/><path d="M11 4.5 Q13 7.5 11 10.5 M13.5 2.5 Q16.5 7.5 13.5 12.5" fill="none" stroke="#e8ecf2"/></svg>
<svg class="a" style="left:1416px;top:870px" width="20" height="20" viewBox="0 0 20 20"><circle cx="9" cy="9" r="8" fill="#2ec4a0"/><text x="3.5" y="13" font-size="11" font-weight="bold" fill="#fff" font-family="Liberation Sans">e</text><path d="M12 19 L15.5 12.5 L19 19Z" fill="#e03a2a"/></svg>
<div class="t" style="left:1442px;top:874px;font-size:12.5px;color:#e8ecf2;">РУС</div>
<div class="t" style="left:1494px;top:865px;font-size:12.5px;color:#e8ecf2;">15:43</div>
<div class="t" style="left:1481px;top:883px;font-size:11.8px;color:#e8ecf2;">19.10.2017</div>
<svg class="a" style="left:1556px;top:867px" width="28" height="28" viewBox="0 0 28 28"><path d="M2 2 H20 V15 H6 L2 19Z" fill="#e8ecf2"/><path d="M5 6 H17 M5 9 H17 M5 12 H13" stroke="#03213d"/><circle cx="19" cy="19" r="7" fill="#1a5a9a" stroke="#8ab4e0"/><text x="16.5" y="23" font-size="10" fill="#fff" font-family="Liberation Sans">1</text></svg>
<div class="a" style="left:1595px;top:858px;width:1px;height:42px;background:#5a6a80"></div>
</body></html>
